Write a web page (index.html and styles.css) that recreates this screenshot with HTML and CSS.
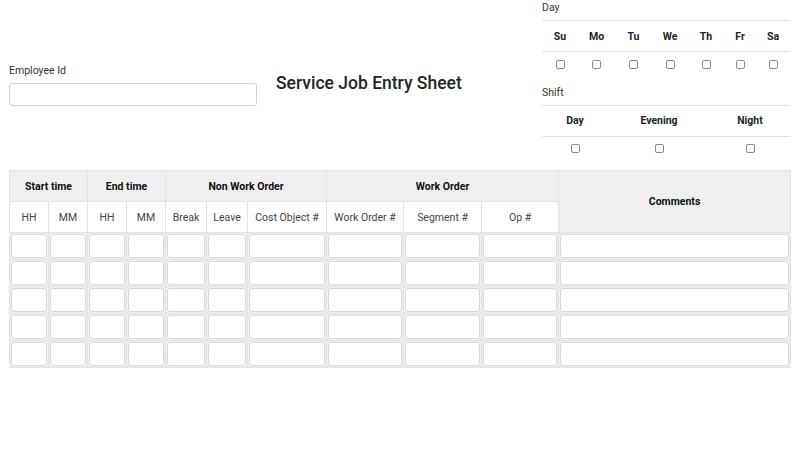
FILE: index.html
```html
<!DOCTYPE html>
<html>
<head>
<meta charset="utf-8">
<link rel="stylesheet" href="styles.css">
</head>
<body>
<div class="page">
  <div class="top">
    <div class="emp">
      <label class="lbl">Employee Id</label>
      <input class="emp-input" type="text">
    </div>
    <div class="title-wrap">
      <h1 class="title">Service Job Entry Sheet</h1>
    </div>
    <div class="side">
      <div class="lbl side-lbl">Day</div>
      <table class="mini days">
        <colgroup>
          <col style="width:36px"><col style="width:37px"><col style="width:37px"><col style="width:36px"><col style="width:36px"><col style="width:32px"><col style="width:34px">
        </colgroup>
        <thead><tr><th>Su</th><th>Mo</th><th>Tu</th><th>We</th><th>Th</th><th>Fr</th><th>Sa</th></tr></thead>
        <tbody><tr>
          <td><input type="checkbox" class="cb"></td><td><input type="checkbox" class="cb"></td><td><input type="checkbox" class="cb"></td><td><input type="checkbox" class="cb"></td><td><input type="checkbox" class="cb"></td><td><input type="checkbox" class="cb"></td><td><input type="checkbox" class="cb"></td>
        </tr></tbody>
      </table>
      <div class="lbl side-lbl shift-lbl">Shift</div>
      <table class="mini shifts">
        <colgroup><col style="width:66px"><col style="width:102px"><col style="width:80px"></colgroup>
        <thead><tr><th>Day</th><th>Evening</th><th>Night</th></tr></thead>
        <tbody><tr>
          <td><input type="checkbox" class="cb"></td><td><input type="checkbox" class="cb"></td><td><input type="checkbox" class="cb"></td>
        </tr></tbody>
      </table>
    </div>
  </div>

  <table class="sheet">
    <colgroup>
      <col style="width:39px"><col style="width:39px"><col style="width:39px"><col style="width:39px">
      <col style="width:41px"><col style="width:41px"><col style="width:79px">
      <col style="width:77px"><col style="width:78px"><col style="width:77px">
      <col style="width:232px">
    </colgroup>
    <thead>
      <tr class="grp">
        <th colspan="2">Start time</th>
        <th colspan="2">End time</th>
        <th colspan="3">Non Work Order</th>
        <th colspan="3">Work Order</th>
        <th rowspan="2">Comments</th>
      </tr>
      <tr class="sub">
        <th>HH</th><th>MM</th><th>HH</th><th>MM</th>
        <th>Break</th><th>Leave</th><th>Cost Object #</th>
        <th>Work Order #</th><th>Segment #</th><th>Op #</th>
      </tr>
    </thead>
    <tbody>
      <tr><td><input class="cell"></td><td><input class="cell"></td><td><input class="cell"></td><td><input class="cell"></td><td><input class="cell"></td><td><input class="cell"></td><td><input class="cell"></td><td><input class="cell"></td><td><input class="cell"></td><td><input class="cell"></td><td><input class="cell"></td></tr>
      <tr><td><input class="cell"></td><td><input class="cell"></td><td><input class="cell"></td><td><input class="cell"></td><td><input class="cell"></td><td><input class="cell"></td><td><input class="cell"></td><td><input class="cell"></td><td><input class="cell"></td><td><input class="cell"></td><td><input class="cell"></td></tr>
      <tr><td><input class="cell"></td><td><input class="cell"></td><td><input class="cell"></td><td><input class="cell"></td><td><input class="cell"></td><td><input class="cell"></td><td><input class="cell"></td><td><input class="cell"></td><td><input class="cell"></td><td><input class="cell"></td><td><input class="cell"></td></tr>
      <tr><td><input class="cell"></td><td><input class="cell"></td><td><input class="cell"></td><td><input class="cell"></td><td><input class="cell"></td><td><input class="cell"></td><td><input class="cell"></td><td><input class="cell"></td><td><input class="cell"></td><td><input class="cell"></td><td><input class="cell"></td></tr>
      <tr><td><input class="cell"></td><td><input class="cell"></td><td><input class="cell"></td><td><input class="cell"></td><td><input class="cell"></td><td><input class="cell"></td><td><input class="cell"></td><td><input class="cell"></td><td><input class="cell"></td><td><input class="cell"></td><td><input class="cell"></td></tr>
    </tbody>
  </table>
</div>
</body>
</html>
```

FILE: styles.css
```css
* { box-sizing: border-box; }
html, body { margin: 0; padding: 0; background: #fff; }
body {
  font-family: Roboto, "Liberation Sans", Arial, sans-serif;
  color: #212529;
  font-size: 10.5px;
}
.page { padding: 0 10px 0 9px; width: 800px; }
.top {
  display: grid;
  grid-template-columns: 248px 1fr 248px;
  column-gap: 19px;
  align-items: center;
  height: 160px;
}
.emp { padding-top: 9px; display: flex; flex-direction: column; }
.lbl { font-size: 10.5px; line-height: 14px; color: #333; }
.emp .lbl { margin-bottom: 5px; }
.emp-input {
  height: 23px;
  width: 100%;
  border: 1px solid #ced4da;
  border-radius: 3px;
  background: #fff;
  margin: 0;
}
.title-wrap { padding-top: 6px; }
.title {
  margin: 0;
  font-size: 17.5px;
  font-weight: 500;
  line-height: 21px;
  color: #212529;
}
.side { align-self: start; }
.side-lbl { padding-top: 1px; margin-bottom: 5px; }
.shift-lbl { margin-top: 9px; }
.mini {
  width: 248px;
  border-collapse: collapse;
  table-layout: fixed;
}
.mini th {
  height: 31px;
  font-weight: 700;
  font-size: 10.5px;
  text-align: center;
  border-top: 1px solid #dee2e6;
  border-bottom: 1px solid #dee2e6;
  padding: 0;
  color: #212529;
}
.mini td { height: 24px; text-align: center; padding: 0; }
.cb {
  appearance: none;
  -webkit-appearance: none;
  width: 9px;
  height: 9px;
  border: 1px solid #8a8a8a;
  border-radius: 2px;
  margin: 0;
  vertical-align: middle;
  background: #fff;
}
.sheet {
  margin-top: 10px;
  width: 781px;
  border-collapse: collapse;
  table-layout: fixed;
}
.sheet th {
  border: 1px solid #e2e2e2;
  text-align: center;
  padding: 0;
  font-size: 10.5px;
}
.sheet .grp th { height: 31px; background: #efefef; font-weight: 700; color: #111; }
.sheet .sub th { height: 31px; background: #fff; font-weight: 400; color: #444; }
.sheet td {
  border: 1px solid #e2e2e2;
  background: #efefef;
  padding: 1px;
  height: 27px;
}
.cell {
  display: block;
  width: 100%;
  height: 24px;
  margin: 0;
  border: 1px solid #d9d9d9;
  border-radius: 3px;
  background: #fff;
  padding: 0;
}
```
